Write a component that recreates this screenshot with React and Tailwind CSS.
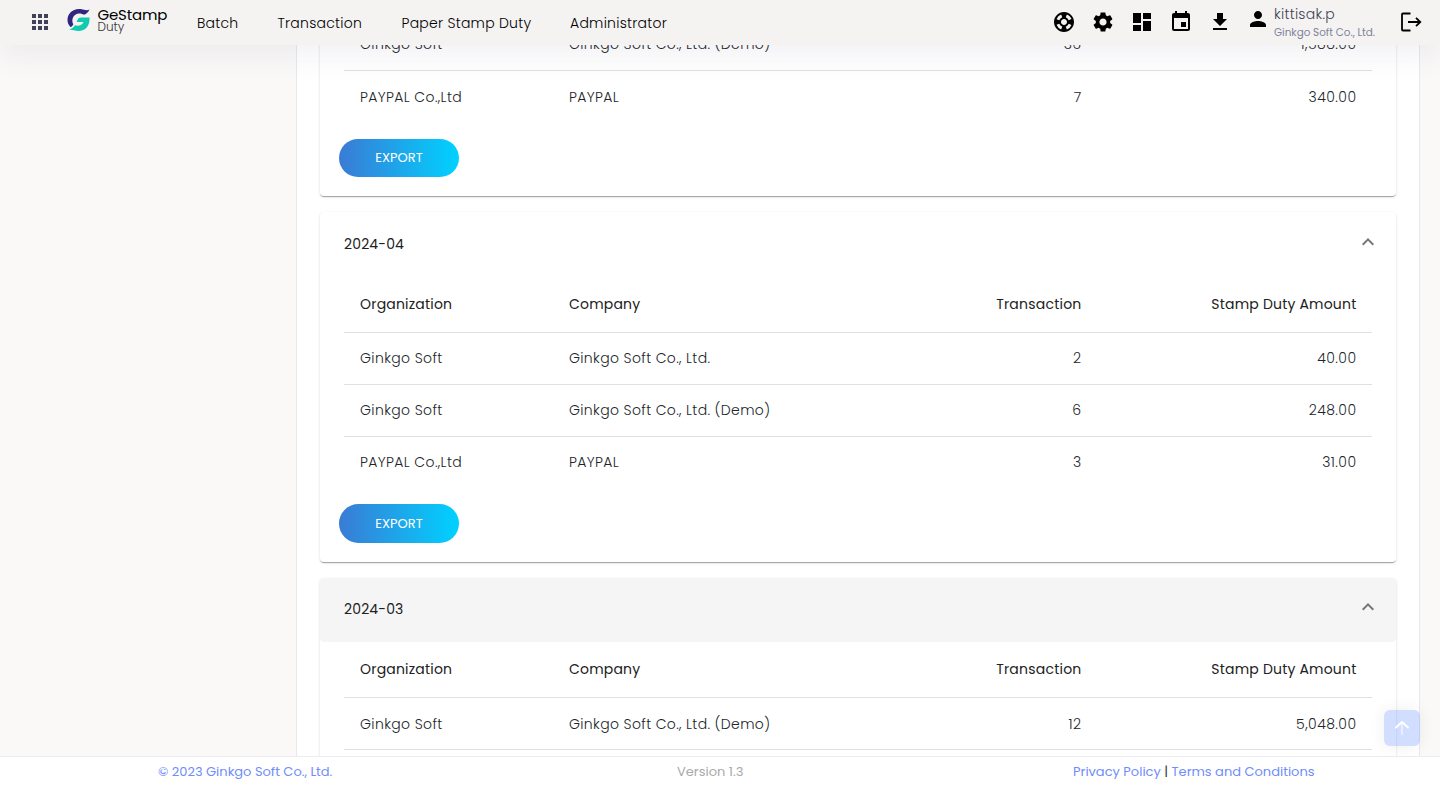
import React from "react";
import { MdApps, MdSettings, MdDashboard, MdEvent, MdDownload, MdPerson, MdExpandLess, MdSupport } from "react-icons/md";

const row = "grid grid-cols-[209px_350px_202px_267px] items-center text-sm";

function Row({ cells, last, raised }) {
  return (
    <div className={`${row} h-[52px] font-light text-[#212529] ${last ? "" : "border-b border-[#e0e0e0]"} ${raised ? "pb-0.5" : ""}`}>
      <span className="pl-4 tracking-[0.38px]">{cells[0]}</span>
      <span className="pl-4 tracking-[0.36px]">{cells[1]}</span>
      <span className="pr-[23.5px] text-right tracking-[0.4px]">{cells[2]}</span>
      <span className="pr-[15.5px] text-right tracking-[0.45px]">{cells[3]}</span>
    </div>
  );
}

function TableHead({ height }) {
  return (
    <div className={`${row} ${height} border-b border-[#e0e0e0] font-normal text-[#212121]`}>
      <span className="pl-4 tracking-[0.2px]">Organization</span>
      <span className="pl-4 tracking-[0.2px]">Company</span>
      <span className="pr-[23.5px] text-right tracking-[0.22px]">Transaction</span>
      <span className="pr-[15.5px] text-right tracking-[0.2px]">Stamp Duty Amount</span>
    </div>
  );
}

function Export({ tall }) {
  return (
    <button className={`ml-[-5px] flex w-[120px] items-center justify-center rounded-full bg-[linear-gradient(to_right,#3a7bd5_0%,#00d2ff_100%)] text-[13px] font-normal text-white ${tall ? "mt-[15px] h-[39px]" : "mt-4 h-[38px]"}`}>
      EXPORT
    </button>
  );
}

const card =
  "rounded bg-white shadow-[0_2px_1px_-1px_rgba(0,0,0,0.2),0_1px_1px_0_rgba(0,0,0,0.14),0_1px_3px_0_rgba(0,0,0,0.12)]";

function Title({ text, shaded }) {
  return (
    <div className={`flex h-16 items-center justify-between rounded px-6 text-sm font-normal text-[#212121] ${shaded ? "bg-[#f5f5f5] pb-0.5" : ""}`}>
      <span className="tracking-[0.15px]">{text}</span>
      <MdExpandLess className="-mt-1 -mr-2 size-6 text-[#757575]" />
    </div>
  );
}

function Logo() {
  return (
    <svg viewBox="0 0 24 24" className="mt-[-2px] size-6" fill="none">
      <path d="M22.500 1.500C20.500 2.600 18.500 2 17 1.800C15.500 1.200 14 1 12 1C5 1 0.500 6 0.500 12C0.500 15 1.800 17.500 3.800 19.200C5 18.400 5.600 17.600 6.300 16.500C3.800 11.500 6.500 5.800 12 5.500C14 5.400 15.500 6 17 6.800C19.500 6 21.500 4 22.500 1.500Z" fill="#30257f" />
      <path d="M22.500 9.500H14.500C11.500 9.500 10 11.500 9.800 14H16.500C15 17.500 11.500 18.300 8 17.300C6.800 19.300 4.500 20.800 1.800 22C4.500 21.300 7.500 23 11.500 23C18.500 23 23 18 22.500 9.500Z" fill="#11cbb0" />
    </svg>
  );
}

export default function App() {
  return (
    <div className="flex h-[786px] flex-col overflow-hidden bg-[#faf9f8] font-['Poppins','Inter',sans-serif]">
      <header className="relative z-10 flex h-[45px] shrink-0 items-center bg-[#f4f3f2] pb-px shadow-[0_10px_30px_0_rgba(82,63,105,0.08)]">
        <MdApps className="ml-7 size-6 text-[#3f4254]" />
        <div className="mb-[3px] ml-[14.5px] flex w-[101.5px] shrink-0 items-center gap-[7px]">
          <Logo />
          <div className="flex flex-col text-black">
            <span className="text-[15px] leading-[13px] font-normal tracking-[-0.2px]">GeStamp</span>
            <span className="text-[12px] leading-[12px] font-light text-[#333]">Duty</span>
          </div>
        </div>
        <nav className="flex flex-1 pt-[3px] text-[14px] font-light tracking-[0.25px] text-black">
          <span className="ml-[29px] w-[80.5px]">Batch</span>
          <span className="w-[124px]">Transaction</span>
          <span className="w-[168.5px]">Paper Stamp Duty</span>
          <span>Administrator</span>
        </nav>
        <div className="flex items-center gap-[15px] text-black">
          <MdSupport className="size-6" />
          <MdSettings className="size-6" />
          <MdDashboard className="size-6" />
          <MdEvent className="size-6" />
          <MdDownload className="size-6" />
        </div>
        <MdPerson className="mb-[6px] ml-[14.5px] size-6 text-black" />
        <div className="ml-[4px] flex w-[126px] flex-col pt-[3px]">
          <span className="text-sm leading-[18px] font-light tracking-[0.25px] text-[#3f4254]">kittisak.p</span>
          <span className="text-[10.4px] leading-[19px] text-[#7e8299]">Ginkgo Soft Co., Ltd.</span>
        </div>
        <svg viewBox="0 0 22 20" className="mr-[18px] h-5 w-[22px]" fill="none" stroke="#000" strokeWidth="1.8">
          <path d="M10.500 1.500H3Q2 1.500 2 2.500V17.500Q2 18.500 3 18.500H10.500M8 10H20M16 5.800L20.300 10L16 14.200" />
        </svg>
      </header>

      <main className="flex min-h-0 flex-1 overflow-hidden">
        <div className="w-[296px] shrink-0" />
        <section className="h-[900px] w-[1124px] shrink-0 border-x border-[#e8e8ee] bg-white px-[23px]">
          <div className="-mt-[26px] flex flex-col gap-4">
            <div className={`${card} h-[177px] px-6`}>
              <Row cells={["Ginkgo Soft", "Ginkgo Soft Co., Ltd. (Demo)", "36", "1,588.00"]} raised />
              <Row cells={["PAYPAL Co.,Ltd", "PAYPAL", "7", "340.00"]} last />
              <Export />
            </div>
            <div className={`${card} h-[350px]`}>
              <Title text="2024-04" />
              <div className="px-6">
                <TableHead height="h-[57px]" />
                <Row cells={["Ginkgo Soft", "Ginkgo Soft Co., Ltd.", "2", "40.00"]} raised />
                <Row cells={["Ginkgo Soft", "Ginkgo Soft Co., Ltd. (Demo)", "6", "248.00"]} raised />
                <Row cells={["PAYPAL Co.,Ltd", "PAYPAL", "3", "31.00"]} last raised />
                <Export tall />
              </div>
            </div>
            <div className={`${card} h-[350px]`}>
              <Title text="2024-03" shaded />
              <div className="px-6">
                <TableHead height="h-[56px] pb-0.5" />
                <Row cells={["Ginkgo Soft", "Ginkgo Soft Co., Ltd. (Demo)", "12", "5,048.00"]} />
              </div>
            </div>
          </div>
        </section>
      </main>

      <footer className="flex h-[30px] shrink-0 border-t border-[#ebedf0] bg-white text-[13px] leading-[29px]">
        <span className="ml-[158px] w-[519px] text-[#6f8dfb]">© 2023 Ginkgo Soft Co., Ltd.</span>
        <span className="w-[396px] text-[#aaa]">Version 1.3</span>
        <span className="text-[#6f8dfb]">
          Privacy Policy <span className="text-[#333]">|</span> Terms and Conditions
        </span>
      </footer>

      <button className="absolute top-[710px] left-[1384px] z-20 flex size-9 items-center justify-center rounded-md bg-[#6993ff]/30 shadow-[0_0_15px_rgba(51,51,51,0.08)]">
        <svg viewBox="0 0 24 24" className="size-6" fill="none">
          <path d="M12 8V18" stroke="#fff" strokeOpacity="0.5" strokeWidth="2" strokeLinecap="round" />
          <path d="M6 11.500L12 6L18 11.500" stroke="#fff" strokeWidth="2" strokeLinecap="round" strokeLinejoin="round" />
        </svg>
      </button>
    </div>
  );
}
